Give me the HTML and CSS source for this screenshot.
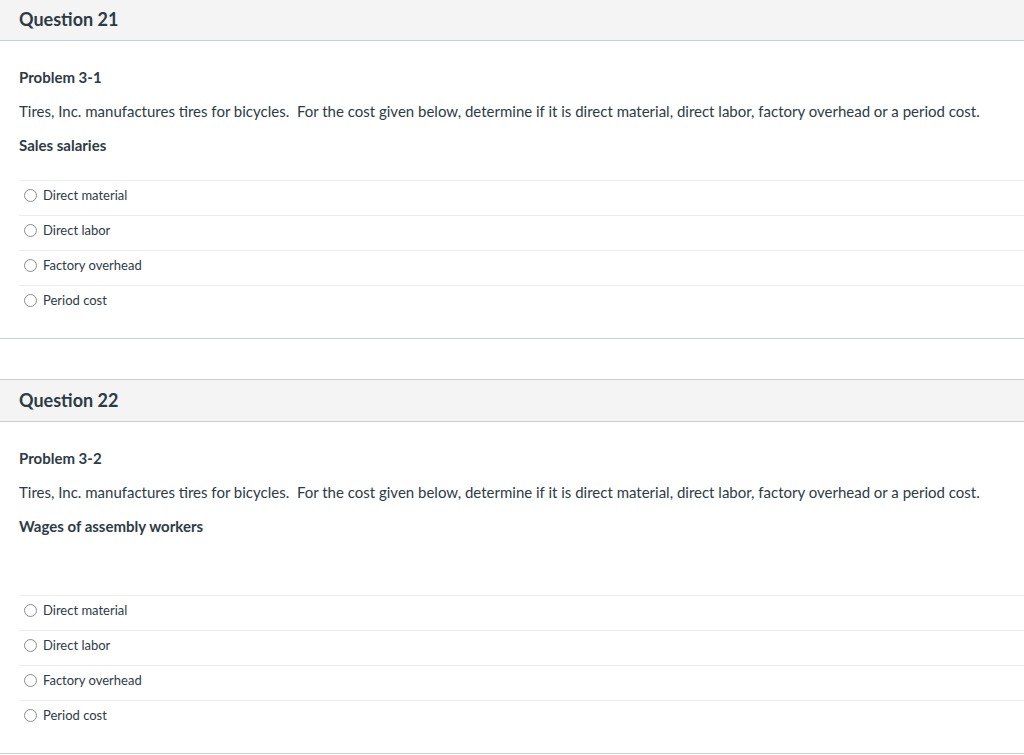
FILE: index.html
```html
<!DOCTYPE html>
<html>
<head>
<meta charset="utf-8">
<link rel="stylesheet" href="styles.css">
</head>
<body>
<div class="quiz">
  <section class="question">
    <div class="q-header">Question 21</div>
    <div class="q-body">
      <p class="strong">Problem 3-1</p>
      <p>Tires, Inc. manufactures tires for bicycles.&nbsp; For the cost given below, determine if it is direct material, direct labor, factory overhead or a period cost.</p>
      <p class="strong">Sales salaries</p>
      <div class="answers">
        <label class="answer"><span class="radio"></span>Direct material</label>
        <label class="answer"><span class="radio"></span>Direct labor</label>
        <label class="answer"><span class="radio"></span>Factory overhead</label>
        <label class="answer"><span class="radio"></span>Period cost</label>
      </div>
    </div>
  </section>
  <section class="question">
    <div class="q-header">Question 22</div>
    <div class="q-body">
      <p class="strong">Problem 3-2</p>
      <p>Tires, Inc. manufactures tires for bicycles.&nbsp; For the cost given below, determine if it is direct material, direct labor, factory overhead or a period cost.</p>
      <p class="strong">Wages of assembly workers</p>
      <p>&nbsp;</p>
      <div class="answers">
        <label class="answer"><span class="radio"></span>Direct material</label>
        <label class="answer"><span class="radio"></span>Direct labor</label>
        <label class="answer"><span class="radio"></span>Factory overhead</label>
        <label class="answer"><span class="radio"></span>Period cost</label>
      </div>
    </div>
  </section>
</div>
</body>
</html>
```
FILE: styles.css
```css
html, body {
  margin: 0;
  padding: 0;
  background: #ffffff;
}
body {
  font-family: Lato, "Open Sans", "Liberation Sans", sans-serif;
  color: #2d3b45;
}
.quiz {
  margin-top: -2px;
}
.question {
  border-top: 1px solid #c7cdd1;
  border-bottom: 1px solid #c7cdd1;
  margin-bottom: 40px;
}
.q-header {
  background: #f4f4f4;
  border-bottom: 1px solid #c7cdd1;
  padding: 8px 19px 9px;
  font-size: 18px;
  line-height: 24px;
  font-weight: 700;
}
.q-body {
  padding: 26px 0 18px;
}
.q-body p {
  margin: 0 19px 14px;
  font-size: 15px;
  line-height: 20px;
}
.q-body p.strong {
  font-weight: 700;
}
.answers {
  margin: 25px 0 0 19px;
}
.answer {
  display: flex;
  align-items: center;
  border-top: 1px solid #ececec;
  padding: 4px 0 10px 5px;
  height: 20px;
  font-size: 13px;
  line-height: 20px;
}
.radio {
  width: 11px;
  height: 11px;
  border: 1px solid #8c8c8c;
  border-radius: 50%;
  background: #fff;
  margin-right: 6px;
  flex: none;
}
```
